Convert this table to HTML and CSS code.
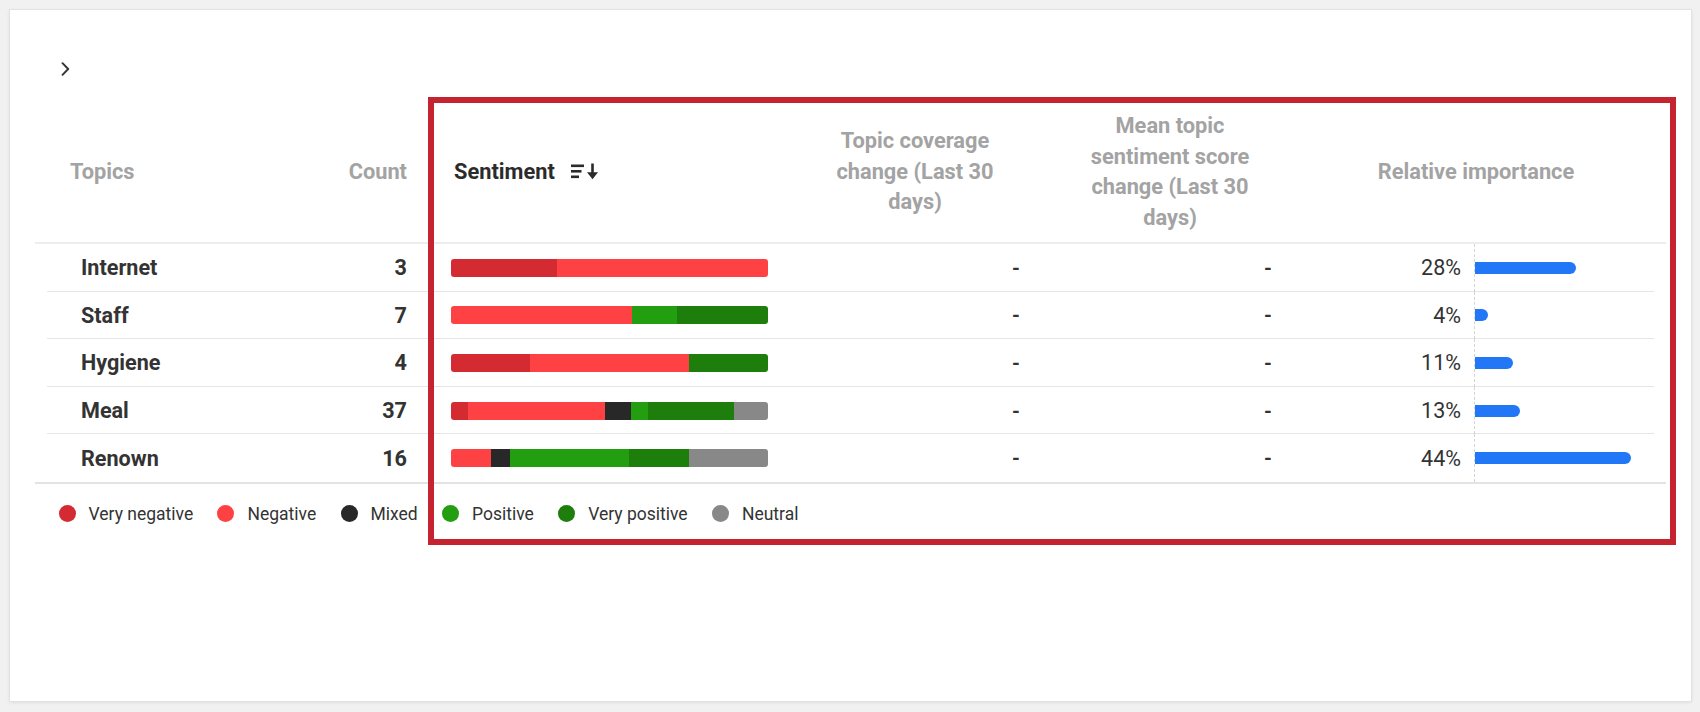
FILE: index.html
```html
<!DOCTYPE html>
<html lang="en">
<head>
<meta charset="utf-8">
<title>Topics sentiment</title>
<link rel="stylesheet" href="styles.css">
</head>
<body>
<div class="card">
  <div class="toolbar">
    <svg class="chevron" width="9" height="14" viewBox="0 0 9 14"><path d="M1.5 1.2 L7.2 7 L1.5 12.8" fill="none" stroke="#333" stroke-width="1.9" stroke-linecap="round" stroke-linejoin="round"/></svg>
  </div>
  <div class="table">
    <div class="row head">
      <div class="c c-topic"><span class="h">Topics</span></div>
      <div class="c c-count"><span class="h">Count</span></div>
      <div class="c c-sent"><span class="h active">Sentiment</span>
        <svg class="sort" width="28" height="17" viewBox="0 0 28 17"><rect x="1" y="1.5" width="13" height="2.6" fill="#2b2b2b"/><rect x="1" y="7" width="10.5" height="2.6" fill="#2b2b2b"/><rect x="1" y="12.5" width="8" height="2.6" fill="#2b2b2b"/><rect x="21.2" y="0.5" width="2.6" height="10" fill="#2b2b2b"/><path d="M17 9.2 L28 9.2 L22.5 16.2 Z" fill="#2b2b2b"/></svg>
      </div>
      <div class="c c-cov"><span class="h wrap">Topic coverage change (Last 30 days)</span></div>
      <div class="c c-mean"><span class="h wrap">Mean topic sentiment score change (Last 30 days)</span></div>
      <div class="c c-rel"><span class="h">Relative importance</span></div>
      <div class="c"></div>
    </div>

    <div class="row body sep">
      <div class="c c-topic name">Internet</div>
      <div class="c c-count num">3</div>
      <div class="c c-sent"><div class="sbar"><span class="vneg" style="flex:1"></span><span class="neg" style="flex:2"></span></div></div>
      <div class="c c-cov dash">-</div>
      <div class="c c-mean dash">-</div>
      <div class="c c-rel"><span class="pct">28%</span><span class="track"><span class="ibar" style="width:101px"></span></span></div>
      <div class="c"></div>
    </div>

    <div class="row body sep">
      <div class="c c-topic name">Staff</div>
      <div class="c c-count num">7</div>
      <div class="c c-sent"><div class="sbar"><span class="neg" style="flex:4"></span><span class="pos" style="flex:1"></span><span class="vpos" style="flex:2"></span></div></div>
      <div class="c c-cov dash">-</div>
      <div class="c c-mean dash">-</div>
      <div class="c c-rel"><span class="pct">4%</span><span class="track"><span class="ibar" style="width:13px"></span></span></div>
      <div class="c"></div>
    </div>

    <div class="row body sep">
      <div class="c c-topic name">Hygiene</div>
      <div class="c c-count num">4</div>
      <div class="c c-sent"><div class="sbar"><span class="vneg" style="flex:1"></span><span class="neg" style="flex:2"></span><span class="vpos" style="flex:1"></span></div></div>
      <div class="c c-cov dash">-</div>
      <div class="c c-mean dash">-</div>
      <div class="c c-rel"><span class="pct">11%</span><span class="track"><span class="ibar" style="width:38px"></span></span></div>
      <div class="c"></div>
    </div>

    <div class="row body sep">
      <div class="c c-topic name">Meal</div>
      <div class="c c-count num">37</div>
      <div class="c c-sent"><div class="sbar"><span class="vneg" style="flex:2"></span><span class="neg" style="flex:16"></span><span class="mix" style="flex:3"></span><span class="pos" style="flex:2"></span><span class="vpos" style="flex:10"></span><span class="neu" style="flex:4"></span></div></div>
      <div class="c c-cov dash">-</div>
      <div class="c c-mean dash">-</div>
      <div class="c c-rel"><span class="pct">13%</span><span class="track"><span class="ibar" style="width:45px"></span></span></div>
      <div class="c"></div>
    </div>

    <div class="row body">
      <div class="c c-topic name">Renown</div>
      <div class="c c-count num">16</div>
      <div class="c c-sent"><div class="sbar"><span class="neg" style="flex:2"></span><span class="mix" style="flex:1"></span><span class="pos" style="flex:6"></span><span class="vpos" style="flex:3"></span><span class="neu" style="flex:4"></span></div></div>
      <div class="c c-cov dash">-</div>
      <div class="c c-mean dash">-</div>
      <div class="c c-rel"><span class="pct">44%</span><span class="track"><span class="ibar" style="width:156px"></span></span></div>
      <div class="c"></div>
    </div>
  </div>

  <div class="legend">
    <span class="item"><span class="dot vneg"></span>Very negative</span>
    <span class="item"><span class="dot neg"></span>Negative</span>
    <span class="item"><span class="dot mix"></span>Mixed</span>
    <span class="item"><span class="dot pos"></span>Positive</span>
    <span class="item"><span class="dot vpos"></span>Very positive</span>
    <span class="item"><span class="dot neu"></span>Neutral</span>
  </div>

  <div class="highlight"></div>
</div>
</body>
</html>
```

FILE: styles.css
```css
* { box-sizing: border-box; }

html, body {
  margin: 0;
  padding: 0;
}

body {
  background: #f1f1f1;
  font-family: Roboto, "Liberation Sans", Arial, sans-serif;
  color: #333;
  width: 1700px;
  height: 712px;
  overflow: hidden;
}

.card {
  position: relative;
  margin: 10px 0 0 10px;
  width: 1681px;
  height: 691px;
  background: #fff;
  box-shadow: 0 0 0 1px #e2e2e2, 0 1px 4px rgba(0, 0, 0, 0.12);
  padding-left: 25px;
}

.toolbar {
  height: 87px;
  padding-top: 52px;
  padding-left: 26px;
}

.chevron { display: block; }

.table {
  width: 1631px;
  border-bottom: 2px solid #e3e3e3;
}

.row {
  display: grid;
  grid-template-columns: 265px 120px 370px 250px 260px 354px 12px;
  align-items: center;
}

.row.head {
  height: 147px;
  padding-top: 5px;
  border-bottom: 2px solid #ededed;
}

.row.body {
  height: 47.6px;
}

.row.sep {
  background-image: linear-gradient(#e6e6e6, #e6e6e6);
  background-repeat: no-repeat;
  background-size: calc(100% - 24px) 1px;
  background-position: 12px 100%;
}

.c { height: 100%; display: flex; align-items: center; }

.h {
  font-size: 21.8px;
  font-weight: 700;
  color: #a3a3a3;
  line-height: 30.5px;
}

.h.active { color: #2b2b2b; }

.h.wrap {
  max-width: 172px;
  text-align: center;
}

.head .c-topic { padding-left: 35px; }
.head .c-count { justify-content: flex-end; padding-right: 13px; }
.head .c-sent { padding-left: 34px; gap: 15px; }
.head .c-cov,
.head .c-mean,
.head .c-rel { justify-content: center; }
.head .c-rel { padding-right: 2px; }

.sort { display: block; margin-top: -1px; }

.name {
  padding-left: 46px;
  font-size: 21.6px;
  font-weight: 700;
  color: #333;
}

.num {
  justify-content: flex-end;
  padding-right: 13px;
  font-size: 21.6px;
  font-weight: 700;
  color: #333;
}

.body .c-sent { padding-left: 31px; }

.sbar {
  display: flex;
  width: 317px;
  height: 18px;
  border-radius: 3px;
  overflow: hidden;
}

.sbar span { display: block; height: 100%; }

.vneg { background: #d42a31; }
.neg { background: #fe4244; }
.mix { background: #282828; }
.pos { background: #239e10; }
.vpos { background: #1d7e0b; }
.neu { background: #888888; }

.dash {
  justify-content: flex-end;
  font-size: 20px;
  font-weight: 700;
  color: #333;
}

.body .c-cov { padding-right: 20px; }
.body .c-mean { padding-right: 28px; }

.pct {
  width: 161px;
  text-align: right;
  font-size: 21.5px;
  font-weight: 400;
  color: #333;
}

.track {
  display: flex;
  align-items: center;
  height: 100%;
  margin-left: 13px;
  border-left: 1px dashed #d4d4d4;
}

.ibar {
  display: block;
  height: 12px;
  background: #2277f6;
  border-radius: 0 6px 6px 0;
}

.legend {
  display: flex;
  align-items: center;
  gap: 24.3px;
  margin-top: 20px;
  padding-left: 23.5px;
  height: 20px;
}

.item {
  display: flex;
  align-items: center;
  gap: 13px;
  font-size: 17.5px;
  color: #333;
}

.dot {
  display: block;
  width: 17px;
  height: 17px;
  border-radius: 50%;
}

.highlight {
  position: absolute;
  left: 418px;
  top: 87px;
  width: 1248px;
  height: 448px;
  border: 6px solid #c4232f;
  pointer-events: none;
}
```
